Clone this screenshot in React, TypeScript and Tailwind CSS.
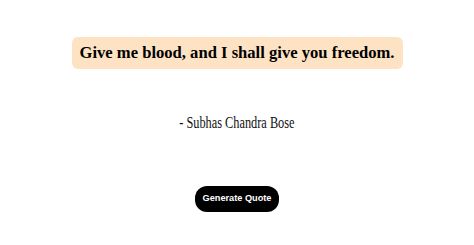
import React from 'react';

export default function App() {
  return (
    <div className="w-[474px] h-[245px] bg-white flex flex-col items-center font-['Liberation_Serif',serif]">
      <div className="mt-[37px] bg-[#fde3c4] rounded-md px-[8px] h-[32px] flex items-center">
        <h1 className="text-[16.6px] font-bold text-black leading-none">
          Give me blood, and I shall give you freedom.
        </h1>
      </div>
      <p className="mt-[46px] text-[16px] text-[#111] leading-none inline-block scale-x-[0.77] whitespace-nowrap">
        - Subhas Chandra Bose
      </p>
      <button className="mt-[55px] bg-black text-white rounded-[12px] h-[26px] px-[8px] text-[9.2px] font-bold font-['Liberation_Sans',sans-serif]">
        Generate Quote
      </button>
    </div>
  );
}
